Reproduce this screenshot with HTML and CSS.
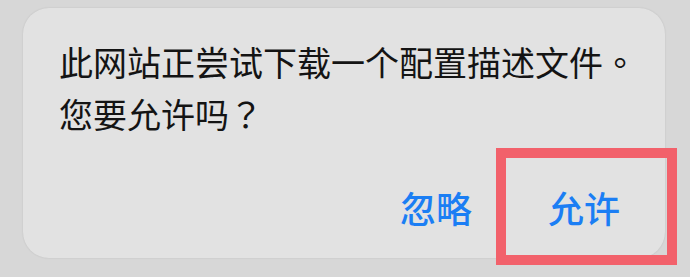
FILE: index.html
```html
<!DOCTYPE html>
<html lang="zh-CN">
<head>
<meta charset="utf-8">
<link rel="stylesheet" href="styles.css">
</head>
<body>
<div class="dialog">
  <p class="message">此网站正尝试下载一个配置描述文件<span class="punct" lang="zh-TW">。</span><br>您要允许吗<span class="punct" lang="zh-TW">？</span></p>
  <div class="actions">
    <span class="btn">忽略</span>
    <span class="btn">允许</span>
  </div>
</div>
<div class="highlight"></div>
</body>
</html>
```

FILE: styles.css
```css
html, body {
  margin: 0;
  padding: 0;
}
body {
  width: 690px;
  height: 277px;
  background: #d7d7d7;
  position: relative;
  overflow: hidden;
  font-family: "Noto Sans CJK SC", "Noto Sans", sans-serif;
}
.dialog {
  box-sizing: border-box;
  margin: 8px 0 0 23px;
  width: 642px;
  height: 250px;
  background: #e2e2e2;
  border-radius: 26px;
  box-shadow: 0 0 2px rgba(0, 0, 0, 0.12);
  padding: 28px 0 21px 36px;
  display: flex;
  flex-direction: column;
}
.message {
  margin: 0;
  font-size: 34px;
  line-height: 52px;
  color: #141414;
  font-weight: 400;
  text-spacing-trim: space-all;
}
.punct {
  display: inline-block;
  width: 1em;
  text-align: center;
  font-family: "Noto Sans CJK TC", "Noto Sans CJK SC", sans-serif;
}
.actions {
  margin-top: 37px;
  display: flex;
  justify-content: flex-end;
  padding-right: 7px;
}
.btn {
  display: block;
  height: 60px;
  line-height: 60px;
  padding: 0 38px;
  font-size: 36px;
  font-weight: 500;
  color: #1b7ef4;
}
.highlight {
  position: absolute;
  left: 496px;
  top: 148px;
  width: 181px;
  height: 117px;
  box-sizing: border-box;
  border: 10px solid #f2616b;
}
```
